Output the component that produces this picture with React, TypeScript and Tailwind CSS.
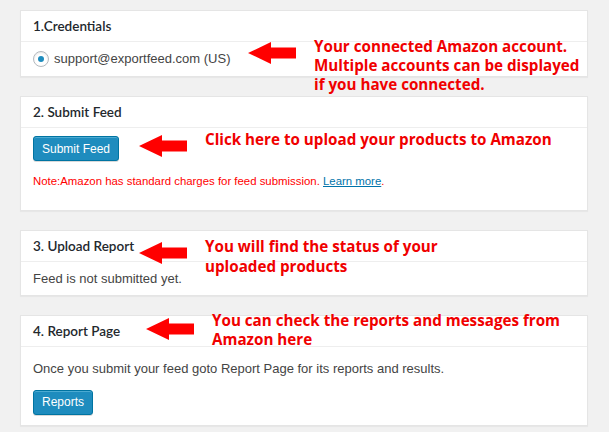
import React from 'react';

const Arrow = ({ className }: { className: string }) => (
  <svg viewBox="0 0 48 22" width="48" height="22" className={className}>
    <path d="M0 11 L23 0 L23 5.5 L48 5.5 L48 16.5 L23 16.5 L23 22 Z" fill="#ff0000" />
  </svg>
);

const Card = ({ title, children }: { title: string; children: React.ReactNode }) => (
  <div className="bg-white border border-[#e5e5e5] shadow-[0_1px_1px_rgba(0,0,0,0.04)]">
    <div
      className="h-[31px] flex items-center px-3 border-b border-[#eeeeee] text-[13.5px] font-semibold text-[#23282d]"
      style={{ fontFamily: 'Lato, "Liberation Sans", sans-serif' }}
    >
      {title}
    </div>
    {children}
  </div>
);

const WpButton = ({ label }: { label: string }) => (
  <button className="h-[25px] px-[8px] rounded-[3px] bg-[#1e8cbe] border border-[#0074a2] text-white text-[12px] shadow-[inset_0_1px_0_rgba(120,200,230,0.5),0_1px_0_rgba(0,0,0,0.15)]">
    {label}
  </button>
);

export default function App() {
  return (
    <div
      className="relative w-[609px] h-[432px] bg-[#f1f1f1] px-5 pt-[10px] overflow-hidden text-[#444]"
      style={{ fontFamily: '"Liberation Sans", Arial, sans-serif' }}
    >
      <div className="w-[568px] flex flex-col gap-[19px]">
        <Card title="1.Credentials">
          <div className="h-[34px] flex items-center px-3 gap-[5px] text-[13px]">
            <span className="w-4 h-4 rounded-full border border-[#b4b9be] flex items-center justify-center shadow-[inset_0_1px_2px_rgba(0,0,0,0.1)]">
              <span className="w-[6px] h-[6px] rounded-full bg-[#1e8cbe]" />
            </span>
            <span>support@exportfeed.com (US)</span>
          </div>
        </Card>

        <Card title="2. Submit Feed">
          <div className="px-3 pt-[8px] pb-[20px] flex flex-col items-start gap-[12px]">
            <WpButton label="Submit Feed" />
            <div className="text-[11.4px] text-[#ff0000]">
              Note:Amazon has standard charges for feed submission.{' '}
              <span className="text-[#0073aa] underline">Learn more</span>.
            </div>
          </div>
        </Card>

        <Card title="3. Upload Report">
          <div className="h-[33px] flex items-center px-3 text-[13px]">Feed is not submitted yet.</div>
        </Card>

        <Card title="4. Report Page">
          <div className="px-3 pt-[12px] pb-[10px] flex flex-col items-start gap-[11px]">
            <div className="text-[13px]">Once you submit your feed goto Report Page for its reports and results.</div>
            <WpButton label="Reports" />
          </div>
        </Card>
      </div>

      <Arrow className="absolute left-[248px] top-[42px]" />
      <Arrow className="absolute left-[139px] top-[135px]" />
      <Arrow className="absolute left-[139px] top-[242px]" />
      <Arrow className="absolute left-[146px] top-[318px]" />

      <div
        className="absolute inset-0 pointer-events-none text-[#f00000] font-bold text-[15.2px]"
        style={{ fontFamily: '"Open Sans", sans-serif' }}
      >
        <div className="absolute left-[314px] top-[37px] leading-[19px]">
          Your connected Amazon account.<br />Multiple accounts can be displayed<br />if you have connected.
        </div>
        <div className="absolute left-[205px] top-[130px] leading-[19px]">
          Click here to upload your products to Amazon
        </div>
        <div className="absolute left-[205px] top-[236px] leading-[20px]">
          You will find the status of your<br />uploaded products
        </div>
        <div className="absolute left-[212px] top-[311px] leading-[19px]">
          You can check the reports and messages from<br />Amazon here
        </div>
      </div>
    </div>
  );
}
